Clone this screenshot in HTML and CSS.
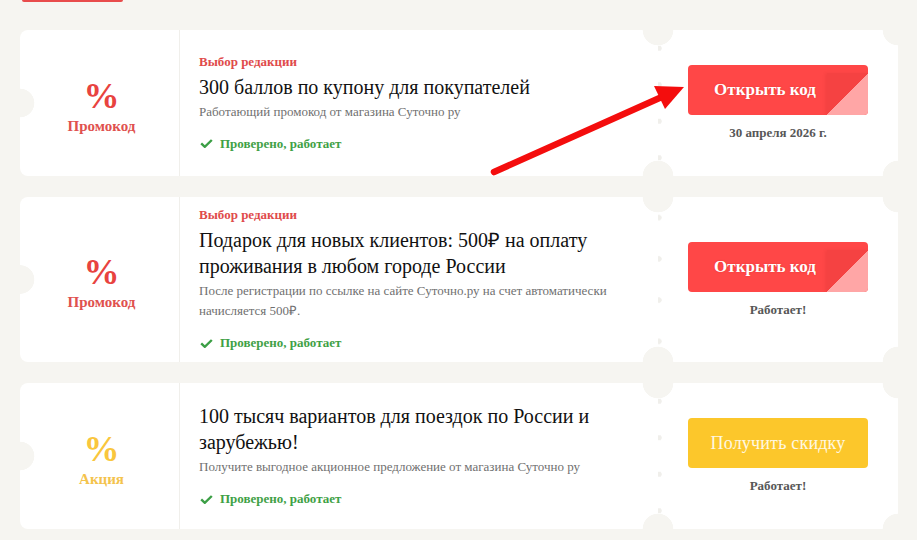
FILE: index.html
```html
<!DOCTYPE html>
<html lang="ru">
<head>
<meta charset="utf-8">
<title>Промокоды Суточно.ру</title>
<link rel="stylesheet" href="styles.css">
</head>
<body>
<div class="page">
  <div class="prev-btn"></div>

  <div class="card">
    <div class="kind kind--red">
      <div class="pct">%</div>
      <div class="kind-name">Промокод</div>
    </div>
    <div class="main">
      <div class="label">Выбор редакции</div>
      <div class="title">300 баллов по купону для покупателей</div>
      <div class="desc">Работающий промокод от магазина Суточно ру</div>
      <div class="checked"><svg class="check" viewBox="0 0 13 9" width="13" height="9"><path d="M1.2 4.4 L4.8 7.8 L11.8 1" fill="none" stroke="currentColor" stroke-width="2.4"/></svg>Проверено, работает</div>
    </div>
    <div class="side">
      <a class="btn btn--code">Открыть код</a>
      <div class="note">30 апреля 2026 г.</div>
    </div>
  </div>

  <div class="card">
    <div class="kind kind--red">
      <div class="pct">%</div>
      <div class="kind-name">Промокод</div>
    </div>
    <div class="main">
      <div class="label">Выбор редакции</div>
      <div class="title">Подарок для новых клиентов: 500₽ на оплату проживания в любом городе России</div>
      <div class="desc">После регистрации по ссылке на сайте Суточно.ру на счет автоматически начисляется 500₽.</div>
      <div class="checked"><svg class="check" viewBox="0 0 13 9" width="13" height="9"><path d="M1.2 4.4 L4.8 7.8 L11.8 1" fill="none" stroke="currentColor" stroke-width="2.4"/></svg>Проверено, работает</div>
    </div>
    <div class="side">
      <a class="btn btn--code">Открыть код</a>
      <div class="note">Работает!</div>
    </div>
  </div>

  <div class="card">
    <div class="kind kind--yellow">
      <div class="pct">%</div>
      <div class="kind-name">Акция</div>
    </div>
    <div class="main">
      <div class="title">100 тысяч вариантов для поездок по России и зарубежью!</div>
      <div class="desc">Получите выгодное акционное предложение от магазина Суточно ру</div>
      <div class="checked"><svg class="check" viewBox="0 0 13 9" width="13" height="9"><path d="M1.2 4.4 L4.8 7.8 L11.8 1" fill="none" stroke="currentColor" stroke-width="2.4"/></svg>Проверено, работает</div>
    </div>
    <div class="side">
      <a class="btn btn--deal">Получить скидку</a>
      <div class="note">Работает!</div>
    </div>
  </div>

  <svg class="arrow" width="917" height="540" viewBox="0 0 917 540">
    <line x1="494" y1="172" x2="664" y2="96" stroke="#f40d0d" stroke-width="6.5" stroke-linecap="round"/>
    <polygon points="684,87 654,86 665,109" fill="#f40d0d"/>
  </svg>
</div>
</body>
</html>
```

FILE: styles.css
```css
html, body {
  margin: 0;
  padding: 0;
}

body {
  background: #f6f5f1;
  font-family: "Liberation Serif", "Times New Roman", serif;
  color: #1a1a1a;
}

.page {
  position: relative;
  padding: 0 19px 0 20px;
  height: 540px;
  overflow: hidden;
}

.prev-btn {
  margin-left: 2px;
  width: 101px;
  height: 2px;
  background: #e84c4c;
  border-radius: 0 0 4px 4px;
  margin-bottom: 28px;
}

.card {
  display: grid;
  grid-template-columns: 160px 1fr 240px;
  min-height: 146px;
  margin-bottom: 21px;
  border-radius: 8px 0 0 8px;
  overflow: hidden;
}

.kind {
  background:
    radial-gradient(circle at 0 50%, #f6f5f1 14px, rgba(246,245,241,0) 14.6px),
    #ffffff;
  border-right: 1px solid #f0efeb;
  display: flex;
  flex-direction: column;
  align-items: center;
  justify-content: center;
  padding: 6px 0 0 4px;
}

.pct {
  font-size: 36px;
  font-weight: bold;
  line-height: 36px;
}

.kind-name {
  font-size: 15px;
  font-weight: bold;
  line-height: 18px;
  margin-top: 3px;
}

.kind--red .pct { color: #e8433f; }
.kind--red .kind-name { color: #e0514e; }
.kind--yellow .pct { color: #f9c63d; }
.kind--yellow .kind-name { color: #f4c34c; }

.main {
  background:
    radial-gradient(circle at 100% 0, #f6f5f1 15px, rgba(246,245,241,0) 15.6px),
    radial-gradient(circle at 100% 100%, #f6f5f1 15px, rgba(246,245,241,0) 15.6px),
    #ffffff;
  padding: 9px 20px 9px 19px;
  display: flex;
  flex-direction: column;
  justify-content: center;
}

.label {
  font-size: 13px;
  font-weight: bold;
  line-height: 18px;
  color: #e04b4b;
  margin-bottom: 3px;
}

.title {
  font-size: 20px;
  line-height: 26px;
  color: #111111;
}

.desc {
  font-size: 13px;
  line-height: 20px;
  color: #707070;
  margin-top: 2px;
}

.checked {
  display: flex;
  align-items: center;
  gap: 7px;
  margin-top: 12px;
  font-size: 13px;
  font-weight: bold;
  line-height: 20px;
  color: #3fa146;
}

.check {
  display: block;
  color: #3c9f46;
  margin-left: 1px;
}

.side {
  background-image:
    radial-gradient(circle at 0 0, #f6f5f1 15px, rgba(246,245,241,0) 15.6px),
    radial-gradient(circle at 0 100%, #f6f5f1 15px, rgba(246,245,241,0) 15.6px),
    radial-gradient(circle at 100% 0, #f6f5f1 15px, rgba(246,245,241,0) 15.6px),
    radial-gradient(circle at 100% 100%, #f6f5f1 15px, rgba(246,245,241,0) 15.6px),
    radial-gradient(circle at 50% 50%, #f0efeb 2.4px, rgba(240,239,235,0) 3px);
  background-size: auto, auto, auto, auto, 6px 40px;
  background-repeat: no-repeat, no-repeat, no-repeat, no-repeat, no-repeat round;
  background-position: 0 0, 0 0, 0 0, 0 0, -2px 0;
  background-color: #ffffff;
  display: flex;
  flex-direction: column;
  align-items: center;
  justify-content: center;
  gap: 10px;
}

.btn {
  position: relative;
  display: flex;
  align-items: center;
  justify-content: center;
  box-sizing: border-box;
  width: 180px;
  height: 50px;
  border-radius: 4px;
  overflow: hidden;
  color: #ffffff;
  text-decoration: none;
  cursor: pointer;
}

.btn--code {
  background: #ff4747;
  font-size: 17px;
  font-weight: bold;
  padding-right: 26px;
  text-shadow: 0 0 2px rgba(150, 0, 0, 0.25);
}

.btn--code::after {
  content: "";
  position: absolute;
  right: 0;
  top: 8px;
  bottom: 0;
  width: 41px;
  background: linear-gradient(to bottom right, #f54242 50%, #ffa6a6 50%);
  box-shadow: -2px 0 3px rgba(120, 0, 0, 0.08);
}

.btn--deal {
  background: #fcc72b;
  font-size: 18px;
  color: #fff8e2;
  letter-spacing: 0.2px;
}

.note {
  font-size: 13px;
  font-weight: bold;
  line-height: 16px;
  color: #575757;
}

.arrow {
  position: absolute;
  left: 0;
  top: 0;
  pointer-events: none;
}
```
